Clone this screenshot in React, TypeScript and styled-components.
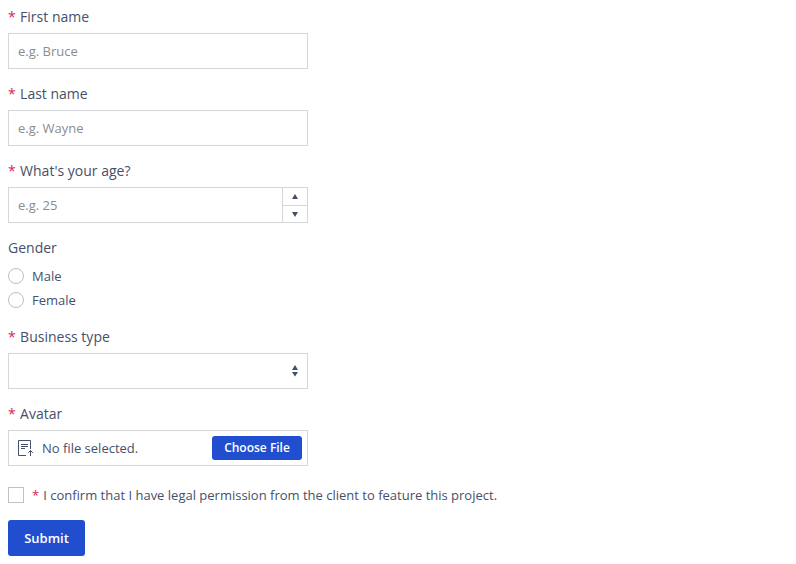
import React from "react";
import styled, { createGlobalStyle, css } from "styled-components";

const Global = createGlobalStyle`
  * { box-sizing: border-box; }
  body { margin: 0; background: #fff; color: #475069; font: 13px/20px "Open Sans", sans-serif; }
`;
const Form = styled.form`
  display: flex; flex-direction: column; align-items: flex-start; padding: 6px 8px 8px;
`;
const Field = styled.div`
  display: flex; flex-direction: column; width: 300px; margin-bottom: 14px;
`;
const Star = styled.span`
  color: #dc1c55; margin-right: 4px;
`;
const Label = styled.label`
  font-size: 14px; line-height: 21px; margin-bottom: 6px;
  ${Star} { margin-right: 4.4px; }
`;
const box = css`
  height: 36px; width: 300px; border: 1px solid #d5d6da; background: #fff;
`;
const Input = styled.input`
  ${box}
  padding: 0 9px; font: inherit; color: inherit; outline: none; border-radius: 0;
  &::placeholder { color: #8c8c8f; opacity: 1; }
`;
const NumberBox = styled.div`
  ${box}
  display: flex;
  input { flex: 1; min-width: 0; height: 34px; border: 0; }
`;
const Spinner = styled.div`
  display: grid; grid-template-rows: 17px 17px; width: 25px; border-left: 1px solid #d5d6da;
`;
const Step = styled.button`
  display: flex; align-items: center; justify-content: center;
  padding: 0; border: 0; background: none; color: #434e69;
  & + & { border-top: 1px solid #d5d6da; padding-top: 1px; }
  svg { display: block; }
`;
const Radios = styled.div`
  display: flex; flex-direction: column; gap: 4px; margin: 2px 0;
`;
const Option = styled.label`
  display: flex; align-items: center; gap: 8px; height: 20px;
`;
const Mark = styled.input<{ $round?: boolean }>`
  appearance: none; margin: 0; width: 16px; height: 16px; background: #fff;
  border: 1px solid #bfc0c3; border-radius: ${p => (p.$round ? "50%" : "0")};
`;
const Select = styled.div`
  ${box}
  display: flex; align-items: center; justify-content: flex-end; padding-right: 9px; color: #434e69;
`;
const FileBox = styled.div`
  ${box}
  display: flex; align-items: center; padding: 0 5px 0 9px;
  span { flex: 1; margin-left: 8px; }
`;
const Button = styled.button<{ $small?: boolean }>`
  border: 0; border-radius: 3px; background: #204ecf; color: #fff;
  font: 600 ${p => (p.$small ? "12px" : "13px")}/20px "Open Sans", sans-serif;
  width: ${p => (p.$small ? "90px" : "77px")}; height: ${p => (p.$small ? "24px" : "36px")}; padding: 0;
`;
const Consent = styled(Option)`
  margin: 5px 0 15px;
`;

const Triangle = ({ down }: { down?: boolean }) => (
  <svg width="6" height="5" viewBox="0 0 6 5" fill="currentColor">
    <path d={down ? "M0 0H6L3 5Z" : "M0 5H6L3 0Z"} />
  </svg>
);

export default function App() {
  return (
    <>
      <Global />
      <Form>
        <Field><Label><Star>*</Star>First name</Label><Input placeholder="e.g. Bruce" /></Field>
        <Field><Label><Star>*</Star>Last name</Label><Input placeholder="e.g. Wayne" /></Field>
        <Field>
          <Label><Star>*</Star>What's your age?</Label>
          <NumberBox>
            <Input placeholder="e.g. 25" />
            <Spinner>
              <Step type="button" aria-label="Increase"><Triangle /></Step>
              <Step type="button" aria-label="Decrease"><Triangle down /></Step>
            </Spinner>
          </NumberBox>
        </Field>
        <Field>
          <Label as="div">Gender</Label>
          <Radios>
            <Option><Mark type="radio" name="gender" $round />Male</Option>
            <Option><Mark type="radio" name="gender" $round />Female</Option>
          </Radios>
        </Field>
        <Field>
          <Label><Star>*</Star>Business type</Label>
          <Select role="combobox">
            <svg width="6" height="12" viewBox="0 0 6 12" fill="currentColor"><path d="M0 5H6L3 0ZM0 7H6L3 11.5Z" /></svg>
          </Select>
        </Field>
        <Field>
          <Label><Star>*</Star>Avatar</Label>
          <FileBox>
            <svg width="16" height="18" viewBox="0 0 16 18" fill="none" stroke="currentColor">
              <path d="M8 16.5H.5V1.5H12.5V10M3 5.5H10M3 7.5H10M3 9.5H7M12.5 17V11.5M10.2 13.8L12.5 11.5L14.8 13.8" />
            </svg>
            <span>No file selected.</span>
            <Button type="button" $small>Choose File</Button>
          </FileBox>
        </Field>
        <Consent>
          <Mark type="checkbox" />
          <div><Star>*</Star>I confirm that I have legal permission from the client to feature this project.</div>
        </Consent>
        <Button type="button">Submit</Button>
      </Form>
    </>
  );
}
